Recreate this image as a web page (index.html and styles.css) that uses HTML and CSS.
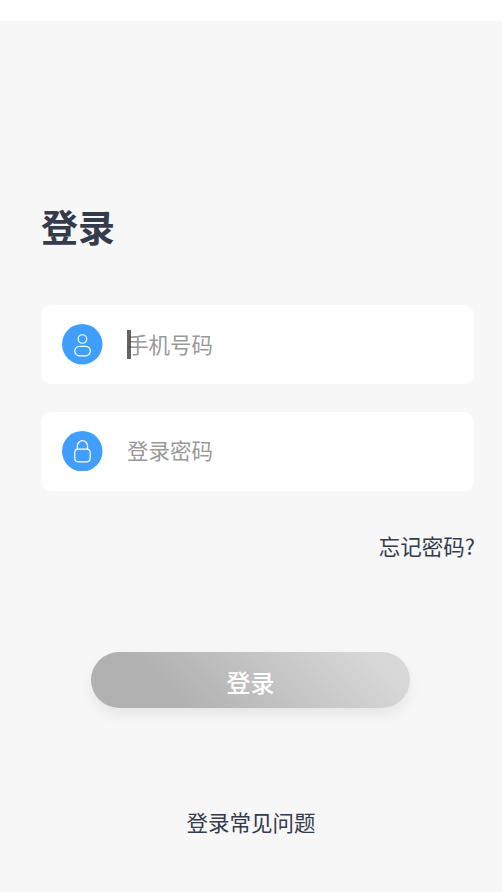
FILE: index.html
```html
<!DOCTYPE html>
<html lang="zh-CN">
<head>
<meta charset="utf-8">
<title>登录</title>
<link rel="stylesheet" href="styles.css">
</head>
<body>
<div class="status-bar"></div>
<main class="login">
  <h1 class="title">登录</h1>
  <div class="fields">
    <div class="field">
      <svg class="icon" viewBox="0 0 40 40" fill="none" stroke="#fff" stroke-width="1.2">
        <circle cx="20" cy="20" r="20" fill="#409eff" stroke="none"/>
        <circle cx="20.2" cy="14.8" r="4.2"/>
        <rect x="12.6" y="22" width="15.4" height="9.4" rx="4.7"/>
      </svg>
      <span class="placeholder">手机号码<i class="caret"></i></span>
    </div>
    <div class="field">
      <svg class="icon" viewBox="0 0 40 40" fill="none" stroke="#fff" stroke-width="1.2">
        <circle cx="20" cy="20" r="20" fill="#409eff" stroke="none"/>
        <rect x="12.6" y="17.8" width="15.2" height="12.6" rx="3.4"/>
        <path d="M15.2 17.8v-3.2a5 5 0 0 1 10 0v3.2"/>
      </svg>
      <span class="placeholder">登录密码</span>
    </div>
  </div>
  <a class="forgot">忘记密码?</a>
  <button class="submit" type="button">登录</button>
  <a class="help">登录常见问题</a>
</main>
</body>
</html>
```
FILE: styles.css
```css
* { box-sizing: border-box; }
body {
  margin: 0;
  height: 892px;
  background: #f7f7f7;
  color: #343b4b;
  font-family: "Noto Sans CJK SC", sans-serif;
  overflow: hidden;
}
.status-bar { height: 21px; background: #fff; }
.login {
  display: flex;
  flex-direction: column;
  padding: 178px 28px 0 41px;
}
.title {
  margin: 0;
  font-size: 37px;
  line-height: 54px;
  font-weight: 700;
}
.fields {
  display: grid;
  gap: 27.5px;
  margin-top: 52px;
}
.field {
  display: flex;
  align-items: center;
  gap: 24.5px;
  height: 79px;
  padding-left: 21px;
  border-radius: 10px;
  background: #fff;
}
.icon { width: 40.5px; height: 40.5px; }
.placeholder {
  position: relative;
  padding-bottom: 2px;
  color: #999;
  font-size: 21.5px;
  line-height: 32px;
}
.caret {
  position: absolute;
  left: 0;
  top: 2px;
  width: 4px;
  height: 29px;
  background: rgba(60, 60, 60, 0.8);
}
.forgot {
  align-self: flex-end;
  margin: 39px -1px 0 0;
  font-size: 21.5px;
  line-height: 32px;
}
.submit {
  align-self: center;
  width: 319px;
  height: 56px;
  margin: 90.5px 14px 0 0;
  padding: 4px 0 0;
  border: 0;
  border-radius: 28px;
  background: linear-gradient(45deg, #b1b1b1 25%, #d8d8d8 90%);
  box-shadow: 0 7px 14px rgba(0, 0, 0, 0.07);
  color: #fff;
  font: 500 24px/52px "Noto Sans CJK SC", sans-serif;
}
.help {
  align-self: center;
  margin: 98px 13px 0 0;
  font-size: 21.5px;
  line-height: 32px;
}
```
